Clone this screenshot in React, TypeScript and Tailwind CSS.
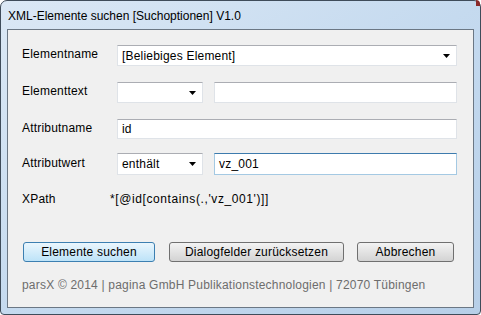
import React from 'react';

const font = "font-['Liberation_Sans',Arial,sans-serif]";

const Arrow = () => (
  <svg width="7" height="4" viewBox="0 0 7 4" className="shrink-0">
    <path d="M0 0H7L3.5 4Z" fill="#000" />
  </svg>
);

const Combo = ({ value, className }: { value: string; className: string }) => (
  <div
    className={`h-full bg-white border border-[#dfe3e8] border-t-[#abadb3] flex items-center justify-between pl-[4px] pr-[6px] ${className}`}
  >
    <span className="text-[12px] text-black leading-none">{value}</span>
    <Arrow />
  </div>
);

const TextBox = ({ value, className, focused }: { value: string; className: string; focused?: boolean }) => (
  <div
    className={`h-full bg-white border flex items-center pl-[4px] ${
      focused ? 'border-[#a4c9e3] border-t-[#3d7bad]' : 'border-[#dfe3e8] border-t-[#abadb3]'
    } ${className}`}
  >
    <span className="text-[12px] text-black leading-none">{value}</span>
  </div>
);

const Label = ({ children }: { children: React.ReactNode }) => (
  <div className="w-[95px] shrink-0 text-[12px] text-black -mt-[3px]">{children}</div>
);

export default function App() {
  return (
    <div className={`w-[481px] h-[315px] bg-white ${font}`}>
      <div className="relative w-full h-full rounded-t-[7px] rounded-b-[4px] border border-[#3f4c5a] bg-gradient-to-br from-[#dbe8f5] via-[#c5daef] to-[#b7cfe8] flex flex-col px-[6px] pb-[6px]">
        {/* close button edge */}
        <div className="absolute -top-px right-0 w-[4px] h-[6px] bg-[#8a2a2a] rounded-tr-[7px]" />

        {/* title bar */}
        <div className="h-[28px] flex items-center pl-[1px] pt-[2px] text-[12px] text-black">
          XML-Elemente suchen [Suchoptionen] V1.0
        </div>

        {/* client area */}
        <div className="flex-1 border border-[#6b7784] bg-[#f0f0f0] flex flex-col pl-[14px] pr-[16px] pt-[15px] tracking-[0.2px]">
          <div className="flex items-center h-[21px]">
            <Label>Elementname</Label>
            <Combo value="[Beliebiges Element]" className="flex-1" />
          </div>

          <div className="flex items-center h-[21px] mt-[16px]">
            <Label>Elementtext</Label>
            <Combo value="" className="w-[86px]" />
            <TextBox value="" className="flex-1 ml-[11px]" />
          </div>

          <div className="flex items-center h-[20px] mt-[16px]">
            <Label>Attributname</Label>
            <TextBox value="id" className="flex-1" />
          </div>

          <div className="flex items-center h-[22px] mt-[14px]">
            <Label>Attributwert</Label>
            <Combo value="enthält" className="w-[86px]" />
            <TextBox value="vz_001" focused className="flex-1 ml-[11px]" />
          </div>

          <div className="flex items-center h-[20px] mt-[14px] text-[12px] text-black">
            <div className="w-[88px] shrink-0">XPath</div>
            <div className="tracking-[0.6px]">*[@id[contains(.,'vz_001')]]</div>
          </div>

          <div className="flex items-center mt-[33px] pl-[1px] text-[12px] text-black">
            <button className="w-[132px] h-[20px] rounded-[3px] border border-[#3c7fb1] bg-gradient-to-b from-[#eaf6fd] to-[#bde3f8] leading-none">
              Elemente suchen
            </button>
            <button className="w-[175px] h-[20px] ml-[14px] rounded-[3px] border border-[#707070] bg-gradient-to-b from-[#f3f3f3] to-[#d3d3d3] leading-none">
              Dialogfelder zurücksetzen
            </button>
            <button className="w-[97px] h-[20px] ml-[13px] rounded-[3px] border border-[#707070] bg-gradient-to-b from-[#f3f3f3] to-[#d3d3d3] leading-none">
              Abbrechen
            </button>
          </div>

          <div className="mt-[14px] text-[12px] text-[#6d6d6d]">
            parsX © 2014 | pagina GmbH Publikationstechnologien | 72070 Tübingen
          </div>
        </div>
      </div>
    </div>
  );
}
